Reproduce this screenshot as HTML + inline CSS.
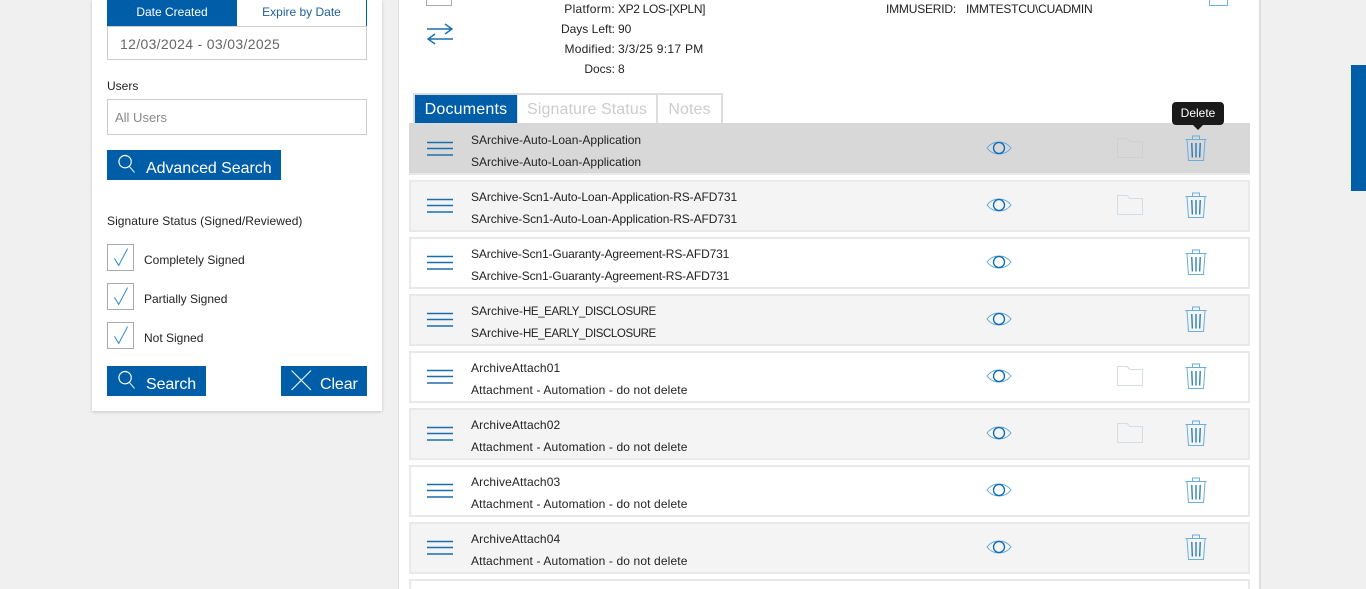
<!DOCTYPE html>
<html style="width:1366px;height:589px;overflow:hidden"><head><meta charset="utf-8"><style>
html,body{margin:0;padding:0}
body{width:1366px;height:589px;overflow:hidden;background:#f0f0f0;position:relative;font-family:"Liberation Sans",sans-serif;color:#222;font-size:12px}
.a{position:absolute;white-space:nowrap;box-sizing:border-box}
.b{background:#005ea8;color:#fff;font-size:16px}
.row{position:absolute;left:409px;width:841px;height:52px;box-sizing:border-box;border:2px solid #e9e9e9;background:#fff}
.row.g{background:#f4f4f4}
.row.s{background:#d8d8d8;border:0;border-bottom:2px solid #e9e9e9}
.t{position:absolute;left:471px;font-size:12px;white-space:nowrap;color:#222}
.sc{letter-spacing:-.09px}.gu{letter-spacing:-.14px}.at{letter-spacing:.13px}.aa{letter-spacing:.13px}
.he span{font-size:11.500px;letter-spacing:-.4px}
.r{position:absolute;text-align:right;width:80px;white-space:nowrap}
.cb{position:absolute;left:107px;width:27px;height:27px;box-sizing:border-box;border:1px solid #aaa;background:#fff}
svg{position:absolute;overflow:visible;fill:none}
</style></head><body>
<svg width="0" height="0" style="position:absolute"><defs>
<symbol id="menu" viewBox="0 0 26 16" overflow="visible"><path d="M0 1.500H26M0 7.500H26M0 14H26" stroke="#1b6fae" stroke-width="1.500"/></symbol>
<symbol id="eye" viewBox="0 0 26 16" overflow="visible"><path d="M1 8C7 0 19 0 25 8C19 16 7 16 1 8Z" stroke="#62a8da" stroke-width="1"/><circle cx="13" cy="8" r="5.500" stroke="#0c69b3" stroke-width="1.300"/></symbol>
<symbol id="trash" viewBox="0 0 22 26" overflow="visible"><path d="M.5 4.500H21.500" stroke="#6aaedc" stroke-width="1.100"/><path d="M7.500 4V1H14.500V4" stroke="#6aaedc" stroke-width="1"/><path d="M2 5L3.500 25.500H18.500L20 5" stroke="#6aaedc" stroke-width="1"/><path d="M6.800 8L7.300 22.500M11 8V22.500M15.200 8L14.700 22.500" stroke="#0c69b3" stroke-width="1.200"/></symbol>
<symbol id="folder" viewBox="0 0 26 20" overflow="visible"><path d="M.5 19.500V.5H10L13 3.500H25.500V19.500Z" stroke="currentColor" stroke-width="1"/></symbol>
<symbol id="mag" viewBox="0 0 18 20" overflow="visible"><circle cx="7.500" cy="7.500" r="6.500" stroke="#fff" stroke-width="1.200"/><path d="M12 12.500L17.500 19" stroke="#cfe2f2" stroke-width="1.200"/></symbol>
<symbol id="chk" viewBox="0 0 16 18" overflow="visible"><path d="M.5 10.500L5 18L14.500 0" stroke="#2e8bd4" stroke-width="1.100"/></symbol>
</defs></svg>

<!-- sidebar -->
<div class="a" style="left:92px;top:0;width:290px;height:411px;background:#fff;box-shadow:0 1px 3px rgba(0,0,0,.18)"></div>
<div class="a b" style="left:107px;top:0;width:130px;height:26px;font-size:12px;text-align:center;line-height:24px">Date Created</div>
<div class="a" style="left:237px;top:0;width:130px;height:26px;font-size:12px;text-align:center;line-height:24px;color:#1e5f99;border-right:1px solid #005ea8">Expire by Date</div>
<div class="a" style="left:107px;top:26px;width:260px;height:34px;border:1px solid #ccc;font-size:14px;letter-spacing:.33px;color:#666;line-height:34px;padding-left:12px">12/03/2024 - 03/03/2025</div>
<div class="a" style="left:107px;top:79px">Users</div>
<div class="a" style="left:107px;top:99px;width:260px;height:36px;border:1px solid #ccc;font-size:13px;color:#888;line-height:35px;padding-left:7px">All Users</div>
<div class="a b" style="left:107px;top:150px;width:174px;height:30px;line-height:37px;padding-left:39px;letter-spacing:-.05px">Advanced Search</div>
<svg style="left:118px;top:154px" width="17" height="20"><use href="#mag" width="17" height="20"/></svg>
<div class="a" style="left:107px;top:214px;letter-spacing:.06px">Signature Status (Signed/Reviewed)</div>
<div class="cb" style="top:244px"></div><svg style="left:114px;top:248px" width="15" height="18"><use href="#chk" width="15" height="18"/></svg>
<div class="a" style="left:144px;top:253px">Completely Signed</div>
<div class="cb" style="top:283px"></div><svg style="left:114px;top:287px" width="15" height="18"><use href="#chk" width="15" height="18"/></svg>
<div class="a" style="left:144px;top:292px">Partially Signed</div>
<div class="cb" style="top:322px"></div><svg style="left:114px;top:326px" width="15" height="18"><use href="#chk" width="15" height="18"/></svg>
<div class="a" style="left:144px;top:331px">Not Signed</div>
<div class="a b" style="left:107px;top:366px;width:99px;height:30px;line-height:37px;padding-left:39px;letter-spacing:-.1px">Search</div>
<svg style="left:118px;top:370px" width="17" height="20"><use href="#mag" width="17" height="20"/></svg>
<div class="a b" style="left:281px;top:366px;width:86px;height:30px;line-height:37px;padding-left:39px;letter-spacing:-.1px">Clear</div>
<svg style="left:291px;top:370px" width="20" height="20"><path d="M.5 .5L20 20M20 .5L.5 20" stroke="#e4eff8" stroke-width="1.200"/></svg>

<!-- main panel -->
<div class="a" style="left:398px;top:0;width:863px;height:589px;background:#fff;border-left:1px solid #ddd;border-right:2px solid #ddd"></div>
<div class="a" style="left:426px;top:0;width:26px;height:6px;border:1px solid #aaa;border-top:0"></div>
<svg style="left:427px;top:24px" width="26" height="20"><path d="M0 5H25M18 0L25 5L18 10M26 15H1M8 10L1 15L8 20" stroke="#1b6fae" stroke-width="1.400"/></svg>
<div class="r" style="left:535px;top:2px;letter-spacing:.3px">Platform:</div><div class="a" style="left:618px;top:2px;letter-spacing:-.35px">XP2 LOS-[XPLN]</div>
<div class="r" style="left:535px;top:22px">Days Left:</div><div class="a" style="left:618px;top:22px">90</div>
<div class="r" style="left:535px;top:42px;letter-spacing:.2px">Modified:</div><div class="a" style="left:618px;top:42px;letter-spacing:.3px">3/3/25 9:17 PM</div>
<div class="r" style="left:535px;top:62px">Docs:</div><div class="a" style="left:618px;top:62px">8</div>
<div class="a" style="left:886px;top:2px;letter-spacing:-.2px">IMMUSERID:</div><div class="a" style="left:966px;top:2px;letter-spacing:-.25px">IMMTESTCU\CUADMIN</div>
<div class="a" style="left:1209px;top:0;width:19px;height:6px;border:1px solid #6db3e0;border-top:0"></div>

<!-- tabs -->
<div class="a" style="left:413px;top:93px;width:310px;height:31px;background:#ddd"></div>
<div class="a b" style="left:415px;top:95px;width:102px;height:29px;line-height:30px;text-align:center;letter-spacing:.2px">Documents</div>
<div class="a" style="left:518px;top:95px;width:138px;height:29px;background:#fff;color:#ccc;font-size:16px;line-height:30px;text-align:center;letter-spacing:.1px">Signature Status</div>
<div class="a" style="left:658px;top:95px;width:63px;height:29px;background:#fff;color:#ccc;font-size:16px;line-height:30px;text-align:center;letter-spacing:.1px">Notes</div>

<!-- rows -->
<div class="row s" style="top:123px"></div>
<div class="row g" style="top:180px"></div>
<div class="row" style="top:237px"></div>
<div class="row g" style="top:294px"></div>
<div class="row" style="top:351px"></div>
<div class="row g" style="top:408px"></div>
<div class="row" style="top:465px"></div>
<div class="row g" style="top:522px"></div>
<div class="row" style="top:579px;height:10px;border-bottom:0"></div>

<div class="t" style="top:133px">SArchive-Auto-Loan-Application</div><div class="t" style="top:155px">SArchive-Auto-Loan-Application</div>
<div class="t sc" style="top:190px">SArchive-Scn1-Auto-Loan-Application-RS-AFD731</div><div class="t sc" style="top:212px">SArchive-Scn1-Auto-Loan-Application-RS-AFD731</div>
<div class="t gu" style="top:247px">SArchive-Scn1-Guaranty-Agreement-RS-AFD731</div><div class="t gu" style="top:269px">SArchive-Scn1-Guaranty-Agreement-RS-AFD731</div>
<div class="t he" style="top:304px">SArchive-<span>HE_EARLY_DISCLOSURE</span></div><div class="t he" style="top:326px">SArchive-<span>HE_EARLY_DISCLOSURE</span></div>
<div class="t aa" style="top:361px">ArchiveAttach01</div><div class="t at" style="top:383px">Attachment - Automation - do not delete</div>
<div class="t aa" style="top:418px">ArchiveAttach02</div><div class="t at" style="top:440px">Attachment - Automation - do not delete</div>
<div class="t aa" style="top:475px">ArchiveAttach03</div><div class="t at" style="top:497px">Attachment - Automation - do not delete</div>
<div class="t aa" style="top:532px">ArchiveAttach04</div><div class="t at" style="top:554px">Attachment - Automation - do not delete</div>

<svg style="left:427px;top:141px" width="26" height="16"><use href="#menu" width="26" height="16"/></svg>
<svg style="left:427px;top:198px" width="26" height="16"><use href="#menu" width="26" height="16"/></svg>
<svg style="left:427px;top:255px" width="26" height="16"><use href="#menu" width="26" height="16"/></svg>
<svg style="left:427px;top:312px" width="26" height="16"><use href="#menu" width="26" height="16"/></svg>
<svg style="left:427px;top:369px" width="26" height="16"><use href="#menu" width="26" height="16"/></svg>
<svg style="left:427px;top:426px" width="26" height="16"><use href="#menu" width="26" height="16"/></svg>
<svg style="left:427px;top:483px" width="26" height="16"><use href="#menu" width="26" height="16"/></svg>
<svg style="left:427px;top:540px" width="26" height="16"><use href="#menu" width="26" height="16"/></svg>

<svg style="left:986px;top:140px" width="26" height="16"><use href="#eye" width="26" height="16"/></svg>
<svg style="left:986px;top:197px" width="26" height="16"><use href="#eye" width="26" height="16"/></svg>
<svg style="left:986px;top:254px" width="26" height="16"><use href="#eye" width="26" height="16"/></svg>
<svg style="left:986px;top:311px" width="26" height="16"><use href="#eye" width="26" height="16"/></svg>
<svg style="left:986px;top:368px" width="26" height="16"><use href="#eye" width="26" height="16"/></svg>
<svg style="left:986px;top:425px" width="26" height="16"><use href="#eye" width="26" height="16"/></svg>
<svg style="left:986px;top:482px" width="26" height="16"><use href="#eye" width="26" height="16"/></svg>
<svg style="left:986px;top:539px" width="26" height="16"><use href="#eye" width="26" height="16"/></svg>

<svg style="left:1117px;top:138px;color:#cfd0d1" width="26" height="20"><use href="#folder" width="26" height="20"/></svg>
<svg style="left:1117px;top:195px;color:#d3dde5" width="26" height="20"><use href="#folder" width="26" height="20"/></svg>
<svg style="left:1117px;top:366px;color:#d3dde5" width="26" height="20"><use href="#folder" width="26" height="20"/></svg>
<svg style="left:1117px;top:423px;color:#d3dde5" width="26" height="20"><use href="#folder" width="26" height="20"/></svg>

<svg style="left:1185px;top:135px" width="22" height="26"><use href="#trash" width="22" height="26"/></svg>
<svg style="left:1185px;top:192px" width="22" height="26"><use href="#trash" width="22" height="26"/></svg>
<svg style="left:1185px;top:249px" width="22" height="26"><use href="#trash" width="22" height="26"/></svg>
<svg style="left:1185px;top:306px" width="22" height="26"><use href="#trash" width="22" height="26"/></svg>
<svg style="left:1185px;top:363px" width="22" height="26"><use href="#trash" width="22" height="26"/></svg>
<svg style="left:1185px;top:420px" width="22" height="26"><use href="#trash" width="22" height="26"/></svg>
<svg style="left:1185px;top:477px" width="22" height="26"><use href="#trash" width="22" height="26"/></svg>
<svg style="left:1185px;top:534px" width="22" height="26"><use href="#trash" width="22" height="26"/></svg>

<!-- tooltip -->
<div class="a" style="left:1172px;top:102px;width:52px;height:23px;background:#1a1a1a;border-radius:4px;color:#fff;font-size:12px;line-height:22px;text-align:center">Delete</div>
<div class="a" style="left:1193px;top:125px;width:0;height:0;border-left:5px solid transparent;border-right:5px solid transparent;border-top:5px solid #1a1a1a"></div>

<!-- right tab -->
<div class="a" style="left:1351px;top:65px;width:15px;height:126px;background:#005ea8"></div>
</body></html>
